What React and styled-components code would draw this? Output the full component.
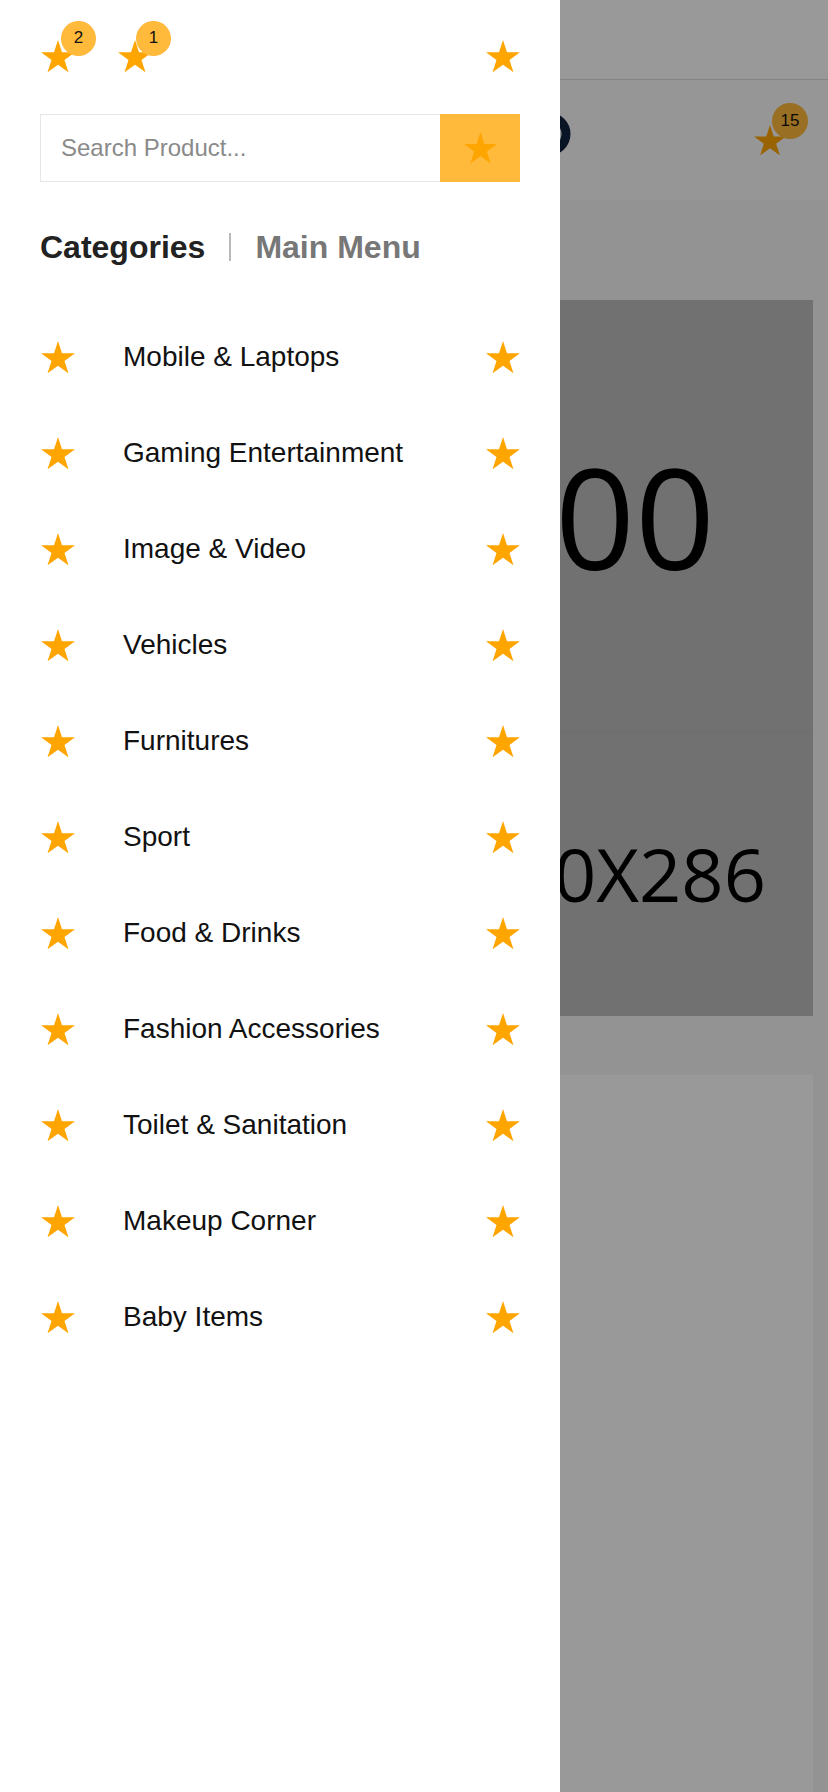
import React from "react";
import styled, { createGlobalStyle } from "styled-components";

const categories = [
  "Mobile & Laptops",
  "Gaming Entertainment",
  "Image & Video",
  "Vehicles",
  "Furnitures",
  "Sport",
  "Food & Drinks",
  "Fashion Accessories",
  "Toilet & Sanitation",
  "Makeup Corner",
  "Baby Items",
];

function Star({ size = 34, color = "#ffa500" }) {
  return (
    <StarSvg $size={size} viewBox="-95.1 -100 190.2 180.9" aria-hidden="true">
      <polygon
        fill={color}
        points="0,-100 22.45,-30.9 95.1,-30.9 36.33,11.8 58.8,80.9 0,38.2 -58.8,80.9 -36.33,11.8 -95.1,-30.9 -22.45,-30.9"
      />
    </StarSvg>
  );
}

function App() {
  return (
    <Page>
      <GlobalStyle />

      {/* the shop page behind the drawer */}
      <TopBar />
      <Header>
        <LogoMark viewBox="0 0 44 44" aria-hidden="true">
          <circle cx="22" cy="22" r="17" fill="none" stroke="#10243f" strokeWidth="9" />
        </LogoMark>
        <Cart>
          <Star size={32} />
          <Badge $size={36} $top={-22} $left={18}>
            15
          </Badge>
        </Cart>
      </Header>
      <Body>
        <Banner>
          <BannerImage $height={431} $fontSize={140} $pad={98}>
            800
          </BannerImage>
          <BannerImage $height={285} $fontSize={74} $pad={47} $divided>
            570X286
          </BannerImage>
        </Banner>
        <Card />
      </Body>

      <Overlay />

      <Drawer>
        <DrawerTop>
          <IconButton>
            <Star />
            <Badge $size={35} $top={-19} $left={20}>
              2
            </Badge>
          </IconButton>
          <IconButton>
            <Star />
            <Badge $size={35} $top={-19} $left={18}>
              1
            </Badge>
          </IconButton>
          <Push>
            <Star />
          </Push>
        </DrawerTop>

        <Search>
          <SearchInput placeholder="Search Product..." />
          <SearchButton>
            <Star size={33} />
          </SearchButton>
        </Search>

        <Tabs>
          <Tab $active>Categories</Tab>
          <TabDivider />
          <Tab>Main Menu</Tab>
        </Tabs>

        <CategoryList>
          {categories.map((name) => (
            <CategoryRow key={name}>
              <RowIcon>
                <Star />
              </RowIcon>
              <CategoryName>{name}</CategoryName>
              <Push>
                <Star />
              </Push>
            </CategoryRow>
          ))}
        </CategoryList>
      </Drawer>
    </Page>
  );
}

const GlobalStyle = createGlobalStyle`
  * {
    box-sizing: border-box;
  }

  body {
    margin: 0;
    font-family: "Liberation Sans", Arial, sans-serif;
    background: #ffffff;
  }
`;

const Page = styled.div`
  position: relative;
  width: 828px;
  height: 1792px;
  overflow: hidden;
  background: #f6f6f6;
`;

const StarSvg = styled.svg`
  display: block;
  width: ${(p) => p.$size}px;
  height: ${(p) => p.$size * 0.951}px;
  flex-shrink: 0;
`;

const TopBar = styled.div`
  height: 80px;
  background: #ffffff;
  border-bottom: 1px solid #dcdcdc;
`;

const Header = styled.header`
  height: 120px;
  display: flex;
  align-items: center;
  padding: 0 42px 0 0;
  background: #fbfbfb;
`;

const LogoMark = styled.svg`
  width: 44px;
  height: 44px;
  margin-left: 527px;
  margin-top: -12px;
`;

const Cart = styled.div`
  position: relative;
  margin-left: auto;
`;

const Badge = styled.span`
  position: absolute;
  top: ${(p) => p.$top}px;
  left: ${(p) => p.$left}px;
  width: ${(p) => p.$size}px;
  height: ${(p) => p.$size}px;
  border-radius: 50%;
  background: #ffb93b;
  color: #111111;
  font-size: 17px;
  display: flex;
  align-items: center;
  justify-content: center;
`;

const Body = styled.main`
  padding: 100px 15px 0;
  display: flex;
  flex-direction: column;
  gap: 59px;
`;

const Banner = styled.section`
  display: flex;
  flex-direction: column;
  background: #bdbdbd;
`;

const BannerImage = styled.div`
  height: ${(p) => p.$height}px;
  display: flex;
  align-items: center;
  justify-content: flex-end;
  padding-right: ${(p) => p.$pad}px;
  font-family: "Open Sans", "DejaVu Sans", sans-serif;
  font-size: ${(p) => p.$fontSize}px;
  line-height: 1;
  color: #000000;
  border-top: ${(p) => (p.$divided ? "1px solid #b6b6b6" : "none")};
`;

const Card = styled.section`
  height: 760px;
  background: #ffffff;
`;

const Overlay = styled.div`
  position: absolute;
  inset: 0;
  background: rgba(0, 0, 0, 0.4);
`;

const Drawer = styled.aside`
  position: absolute;
  top: 0;
  left: 0;
  bottom: 0;
  width: 560px;
  background: #ffffff;
  padding: 40px 40px 0 41px;
`;

const DrawerTop = styled.div`
  display: flex;
  align-items: center;
  gap: 43px;
  height: 32px;
`;

const IconButton = styled.div`
  position: relative;
`;

const Push = styled.div`
  margin-left: auto;
`;

const Search = styled.form`
  margin: 42px 0 0 -1px;
  height: 68px;
  display: flex;
  border: 1px solid #e6e6e6;
  border-right: none;
`;

const SearchInput = styled.input`
  flex: 1;
  min-width: 0;
  border: none;
  outline: none;
  padding: 0 20px;
  font-family: "Liberation Sans", Arial, sans-serif;
  font-size: 24px;
  color: #333333;

  &::placeholder {
    color: #8a8a8a;
  }
`;

const SearchButton = styled.div`
  width: 80px;
  margin: -1px 0;
  background: #ffb93b;
  display: flex;
  align-items: center;
  justify-content: center;
`;

const Tabs = styled.nav`
  margin: 49px 0 0 -1px;
  display: flex;
  align-items: center;
  height: 32px;
`;

const Tab = styled.span`
  font-size: 32px;
  line-height: 32px;
  font-weight: 700;
  color: ${(p) => (p.$active ? "#222222" : "#777777")};
`;

const TabDivider = styled.span`
  width: 2px;
  height: 28px;
  margin: 0 24px;
  background: #b9b9b9;
`;

const CategoryList = styled.ul`
  list-style: none;
  margin: 46px 0 0;
  padding: 0;
`;

const CategoryRow = styled.li`
  height: 96px;
  display: flex;
  align-items: center;
`;

const RowIcon = styled.div`
  width: 82px;
`;

const CategoryName = styled.span`
  font-size: 28px;
  color: #111111;
`;

export default App;
